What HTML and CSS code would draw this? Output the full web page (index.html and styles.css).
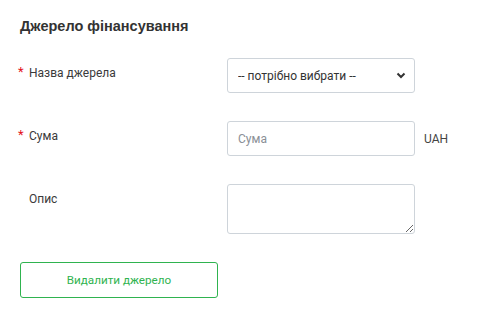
FILE: index.html
```html
<!DOCTYPE html>
<html lang="uk">
<head>
    <meta charset="UTF-8">
    <title>Джерело фінансування</title>
    <link rel="stylesheet" href="styles.css">
</head>
<body>
<div class="source">
    <h2 class="source-title">Джерело фінансування</h2>

    <div class="row">
        <label class="label required" for="source-name">Назва джерела</label>
        <div class="field select-wrap">
            <select class="control" id="source-name">
                <option>-- потрібно вибрати --</option>
            </select>
            <svg class="chevron" width="10" height="7" viewBox="0 0 10 7">
                <path d="M1.5 1.5 L5 5 L8.5 1.5" fill="none" stroke="#333" stroke-width="2"/>
            </svg>
        </div>
    </div>

    <div class="row">
        <label class="label required" for="source-sum">Сума</label>
        <div class="field">
            <input class="control" id="source-sum" placeholder="Сума">
        </div>
        <span class="unit">UAH</span>
    </div>

    <div class="row">
        <label class="label" for="source-desc">Опис</label>
        <div class="field">
            <textarea class="control memo" id="source-desc"></textarea>
        </div>
    </div>

    <button class="remove">Видалити джерело</button>
</div>
</body>
</html>
```

FILE: styles.css
```css
body {
    margin: 0;
    font-family: Roboto, "Liberation Sans", Arial, sans-serif;
    color: #333;
    background: #fff;
}

.source {
    padding: 17px 20px;
}

.source-title {
    margin: 0 0 23px;
    font-family: "Liberation Sans", Arial, sans-serif;
    font-size: 14.5px;
    line-height: 18px;
    font-weight: bold;
    color: #333;
}

.row {
    display: flex;
    align-items: flex-start;
    margin-bottom: 28px;
}

.label {
    position: relative;
    width: 198px;
    padding: 7px 0 0 9px;
    font-size: 12px;
    line-height: 16px;
    color: #3a3a3a;
}

.required::before {
    content: "*";
    position: absolute;
    left: -2px;
    top: 6px;
    color: #e3111b;
    font-size: 13px;
}

.field {
    width: 188px;
}

.select-wrap {
    position: relative;
}

.control {
    display: block;
    box-sizing: border-box;
    width: 100%;
    height: 35px;
    margin: 0;
    padding: 0 10px;
    border: 1px solid #ced4da;
    border-radius: 3px;
    background: #fff;
    font-family: Roboto, "Liberation Sans", Arial, sans-serif;
    font-size: 12px;
    color: #333;
    outline: none;
}

select.control {
    appearance: none;
    -webkit-appearance: none;
}

.control::placeholder {
    color: #8a8f96;
}

.chevron {
    position: absolute;
    right: 9px;
    top: 14px;
}

.memo {
    height: 50px;
    padding: 6px 10px;
}

.unit {
    margin-left: 9px;
    padding-top: 10px;
    font-size: 12px;
    line-height: 16px;
    color: #444;
}

.remove {
    display: block;
    width: 198px;
    height: 36px;
    margin-top: 1px;
    border: 1px solid #2fb34f;
    border-radius: 3px;
    background: #fff;
    color: #2fb34f;
    font-family: Roboto, "Liberation Sans", Arial, sans-serif;
    font-size: 11.7px;
}
```
